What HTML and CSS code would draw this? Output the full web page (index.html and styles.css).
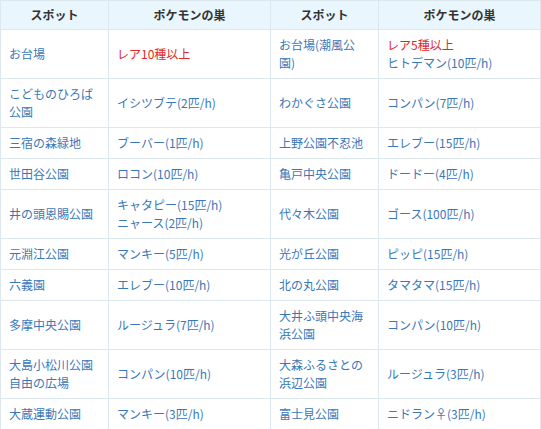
FILE: index.html
```html
<!DOCTYPE html>
<html lang="ja">
<head>
<meta charset="utf-8">
<link rel="stylesheet" href="styles.css">
</head>
<body>
<table class="nest-table">
  <colgroup>
    <col class="c-spot"><col class="c-nest"><col class="c-spot"><col class="c-nest">
  </colgroup>
  <thead>
    <tr><th>スポット</th><th>ポケモンの巣</th><th>スポット</th><th>ポケモンの巣</th></tr>
  </thead>
  <tbody>
    <tr><td>お台場</td><td><span class="rare">レア10種以上</span></td><td>お台場(潮風公園)</td><td><span class="rare">レア5種以上</span><br>ヒトデマン(10匹/h)</td></tr>
    <tr><td>こどものひろば公園</td><td>イシツブテ(2匹/h)</td><td>わかぐさ公園</td><td>コンパン(7匹/h)</td></tr>
    <tr><td>三宿の森緑地</td><td>ブーバー(1匹/h)</td><td>上野公園不忍池</td><td>エレブー(15匹/h)</td></tr>
    <tr><td>世田谷公園</td><td>ロコン(10匹/h)</td><td>亀戸中央公園</td><td>ドードー(4匹/h)</td></tr>
    <tr><td>井の頭恩賜公園</td><td>キャタピー(15匹/h)<br>ニャース(2匹/h)</td><td>代々木公園</td><td>ゴース(100匹/h)</td></tr>
    <tr><td>元淵江公園</td><td>マンキー(5匹/h)</td><td>光が丘公園</td><td>ピッピ(15匹/h)</td></tr>
    <tr><td>六義園</td><td>エレブー(10匹/h)</td><td>北の丸公園</td><td>タマタマ(15匹/h)</td></tr>
    <tr><td>多摩中央公園</td><td>ルージュラ(7匹/h)</td><td>大井ふ頭中央海浜公園</td><td>コンパン(10匹/h)</td></tr>
    <tr><td>大島小松川公園自由の広場</td><td>コンパン(10匹/h)</td><td>大森ふるさとの浜辺公園</td><td>ルージュラ(3匹/h)</td></tr>
    <tr><td>大蔵運動公園</td><td>マンキー(3匹/h)</td><td>富士見公園</td><td>ニドラン♀(3匹/h)</td></tr>
  </tbody>
</table>
</body>
</html>
```

FILE: styles.css
```css
html, body {
  margin: 0;
  padding: 0;
  background: #ffffff;
}
body {
  font-family: "Noto Sans CJK JP", "Noto Sans", sans-serif;
  font-size: 12px;
  line-height: 18px;
  color: #3a77b8;
}
.nest-table {
  border-collapse: collapse;
  table-layout: fixed;
  width: 540px;
}
.c-spot { width: 108px; }
.c-nest { width: 162px; }
.nest-table th,
.nest-table td {
  border: 1px solid #dde7ee;
  padding: 6px 8px;
  text-align: left;
  vertical-align: middle;
  word-break: break-all;
}
.nest-table th {
  background: #e9f6fd;
  color: #333333;
  font-weight: bold;
  text-align: center;
  padding: 5px 8px;
}
.rare {
  color: #e3252b;
}
```
